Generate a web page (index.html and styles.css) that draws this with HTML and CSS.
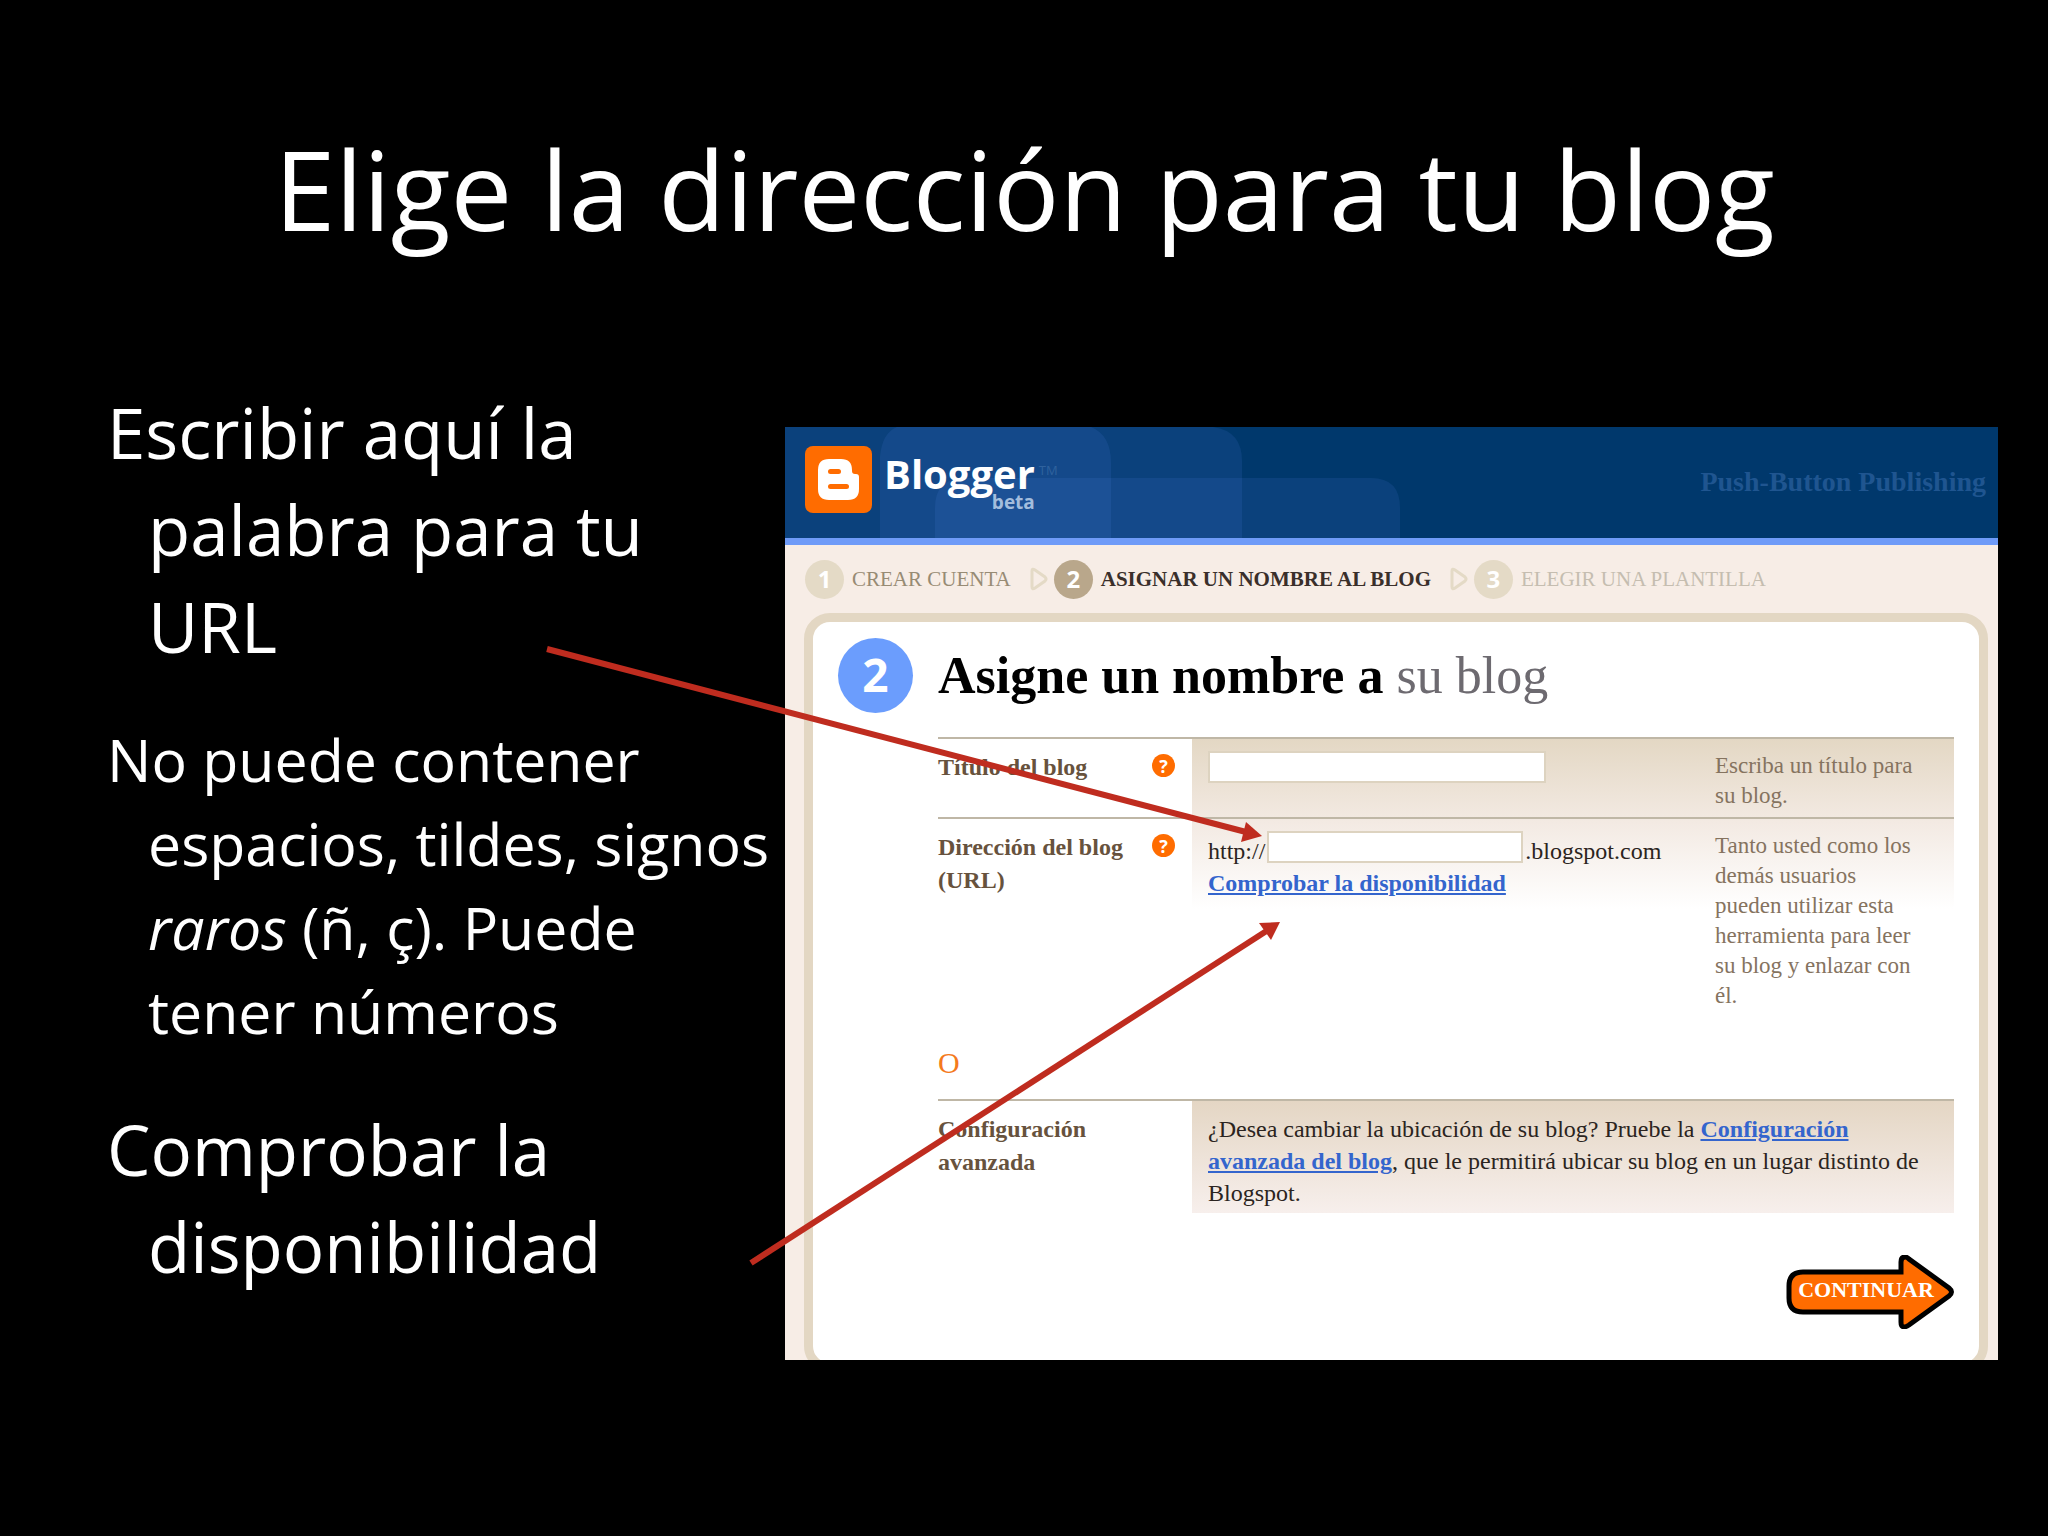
FILE: index.html
```html
<!DOCTYPE html>
<html lang="es">
<head>
  <meta charset="UTF-8">
  <meta name="viewport" content="width=device-width, initial-scale=1.0">
  <title>Elige la dirección para tu blog</title>
  <link rel="stylesheet" href="styles.css">
</head>
<body>
  <main class="slide">
    <h1 class="titulo">Elige la dirección para tu blog</h1>

    <div class="contenido">
      <div class="notas">
        <p>Escribir aquí la<br>palabra para tu<br>URL</p>
        <p class="detalle">No puede contener<br>espacios, tildes, signos<br><em>raros</em> (ñ, ç). Puede<br>tener números</p>
        <p>Comprobar la<br>disponibilidad</p>
      </div>

      <section class="captura">
        <header class="cabecera">
          <svg class="fondo" viewBox="0 0 640 111" aria-hidden="true">
            <path d="M0 0H428Q457 4 457 34V111H0Z"/>
            <path d="M95 111V30Q97 6 112 0H306Q326 8 326 36V111Z"/>
            <path d="M150 111V81Q150 51 180 51H586Q615 51 615 81V111Z"/>
          </svg>
          <svg class="logo" viewBox="0 0 67 67" aria-hidden="true">
            <rect width="67" height="67" rx="8" fill="#ff6c00"/>
            <path fill="#fff" d="M24 13H36Q47 13 47 24V25Q47 28 50 28H51Q54 28 54 31V43Q54 54 43 54H24Q13 54 13 43V24Q13 13 24 13Z"/>
            <rect x="23" y="23" width="13" height="5" rx="2.5" fill="#ff6c00"/>
            <rect x="23" y="38" width="21" height="5" rx="2.5" fill="#ff6c00"/>
          </svg>
          <div class="marca">
            <span class="nombre">Blogger</span>
            <span class="tm">TM</span>
            <span class="beta">beta</span>
          </div>
          <p class="lema">Push-Button Publishing</p>
        </header>

        <ol class="pasos">
          <li class="paso"><span class="num">1</span>CREAR CUENTA</li>
          <li class="flecha"><svg viewBox="0 0 18 24" aria-hidden="true"><path d="M2 4Q2 1 5 3L15 10Q17 12 15 14L5 21Q2 23 2 20Z"/></svg></li>
          <li class="paso actual"><span class="num">2</span>ASIGNAR UN NOMBRE AL BLOG</li>
          <li class="flecha"><svg viewBox="0 0 18 24" aria-hidden="true"><path d="M2 4Q2 1 5 3L15 10Q17 12 15 14L5 21Q2 23 2 20Z"/></svg></li>
          <li class="paso pendiente"><span class="num">3</span>ELEGIR UNA PLANTILLA</li>
        </ol>

        <form class="caja">
          <span class="grande">2</span>
          <h2>Asigne un nombre a <span>su blog</span></h2>

          <div class="campos">
            <div class="fila">
              <label for="nombre">Título del blog</label>
              <button type="button" class="ayuda" aria-label="Ayuda: título">?</button>
              <div class="dato">
                <input type="text" id="nombre" class="largo">
              </div>
              <p class="pista">Escriba un título para su blog.</p>
            </div>
            <div class="fila">
              <label for="url">Dirección del blog (URL)</label>
              <button type="button" class="ayuda" aria-label="Ayuda: dirección">?</button>
              <div class="dato">
                <div class="url">
                  <span>http://</span><input type="text" id="url"><span>.blogspot.com</span>
                </div>
                <a href="#url">Comprobar la disponibilidad</a>
              </div>
              <p class="pista">Tanto usted como los demás usuarios pueden utilizar esta herramienta para leer su blog y enlazar con él.</p>
            </div>

            <p class="o">O</p>

            <div class="avanzada">
              <h3>Configuración avanzada</h3>
              <p>¿Desea cambiar la ubicación de su blog? Pruebe la <a href="#avanzada">Configuración avanzada del blog</a>, que le permitirá ubicar su blog en un lugar distinto de Blogspot.</p>
            </div>

            <button type="submit" class="continuar">
              <svg viewBox="0 0 168 74" aria-hidden="true">
                <path d="M17 17H115V7Q115 2 119 2Q121 2 123 4L163 33Q168 37 163 41L123 70Q115 75 115 67V57H17Q3 57 3 43V31Q3 17 17 17Z"/>
              </svg>
              <span>CONTINUAR</span>
            </button>
          </div>
        </form>
      </section>
    </div>

    <!-- flechas que unen las notas con la captura -->
    <svg class="flechas" viewBox="0 0 2048 1536" aria-hidden="true">
      <path d="M547 649L1246 832" class="linea"/>
      <path d="M1262 836L1241 842L1246 822Z"/>
      <path d="M751 1263L1268 930" class="linea"/>
      <path d="M1280 922L1271 940L1259 923Z"/>
    </svg>
  </main>
</body>
</html>
```
FILE: styles.css
```css
* {
  box-sizing: border-box;
}

body {
  margin: 0;
  background: #000;
  color: #fff;
  font-family: "Open Sans", sans-serif;
}

h1, h2, h3, p {
  margin: 0;
}

.slide {
  position: relative;
  min-height: 100vh;
  padding: 120px 50px 0 107px;
}

.titulo {
  padding-right: 56px;
  margin-bottom: 128px;
  font-size: 110px;
  font-weight: normal;
  line-height: 136px;
  text-align: center;
}

.contenido {
  display: grid;
  grid-template-columns: 678fr 1213fr;
  align-items: start;
}

/* solo la primera línea sale hacia la izquierda */
.notas {
  padding-left: 41px;
  font-size: 69px;
  line-height: 97px;
  text-indent: -41px;
  white-space: nowrap;
}

.notas .detalle {
  margin: 42px 0 48px;
  font-size: 59px;
  line-height: 84px;
}

/* captura de Blogger */
.captura {
  margin-top: 43px;
  overflow: hidden;
  background: #f7ede6;
  color: #2b2420;
  font-family: "Liberation Serif", serif;
  font-size: 24px;
}

.cabecera {
  position: relative;
  display: flex;
  align-items: center;
  height: 118px;
  padding: 0 12px 6px 20px;
  background: #00386c;
  border-bottom: 7px solid #6f9bf8;
}

.fondo {
  position: absolute;
  left: 0;
  top: 0;
  height: 111px;
  fill: #6090ff;
  fill-opacity: 0.11;
}

.logo {
  position: relative;
  width: 67px;
  height: 67px;
}

.marca {
  position: relative;
  display: grid;
  grid-template-columns: auto auto;
  align-items: start;
  margin-left: 12px;
  padding-top: 4px;
  color: #fff;
  font-family: "Open Sans", sans-serif;
  font-weight: bold;
}

.nombre {
  font-size: 40px;
  line-height: 40px;
}

.tm {
  padding-left: 4px;
  color: #2f629e;
  font-size: 13px;
  font-weight: normal;
  line-height: 32px;
}

.beta {
  justify-self: end;
  color: #a3bddd;
  font-size: 19px;
  line-height: 16px;
}

.lema {
  position: relative;
  margin-left: auto;
  padding-top: 4px;
  color: #1f5590;
  font-size: 28px;
  font-weight: bold;
}

.pasos {
  display: flex;
  align-items: center;
  height: 68px;
  margin: 0;
  padding: 0 20px;
  list-style: none;
  color: #978b74;
  font-size: 21px;
  white-space: nowrap;
}

.paso {
  display: flex;
  align-items: center;
  gap: 8px;
}

.num {
  width: 39px;
  height: 39px;
  border-radius: 50%;
  background: #e4dac6;
  color: #fff;
  font-family: "Open Sans", sans-serif;
  font-size: 24px;
  font-weight: bold;
  line-height: 38px;
  text-align: center;
}

.actual {
  color: #3a2f2a;
  font-weight: bold;
}

.actual .num {
  background: #b9a78b;
}

.pendiente {
  color: #c5bdb0;
}

.flecha {
  height: 24px;
  margin: 0 6px 0 19px;
}

.flecha svg {
  width: 18px;
  height: 24px;
  fill: none;
  stroke: #e4dac6;
  stroke-width: 3;
}

.caja {
  display: grid;
  grid-template-columns: 75px 1fr;
  column-gap: 25px;
  margin: 0 10px -12px 19px;
  padding: 16px 25px 34px;
  border: 9px solid #e3d7c3;
  border-radius: 26px;
  background: #fff;
}

.grande {
  width: 75px;
  height: 75px;
  border-radius: 50%;
  background: #6b9dfd;
  color: #fff;
  font-family: "Open Sans", sans-serif;
  font-size: 46px;
  font-weight: bold;
  line-height: 73px;
  text-align: center;
}

h2 {
  color: #000;
  font-size: 52px;
  line-height: 76px;
}

h2 span {
  color: #6d6a70;
  font-weight: normal;
}

.campos {
  grid-column: 2;
  margin-top: 23px;
  background: linear-gradient(#e3d7c3, #f3eae3 50%, #fff) right top / 75% 172px no-repeat;
}

.fila {
  display: grid;
  grid-template-columns: 21% 4% 1fr 223px;
  align-items: start;
  padding: 12px 16px 6px 0;
  border-top: 2px solid #bfb7a6;
}

.fila label,
.avanzada h3 {
  color: #67523d;
  font-size: 24px;
  font-weight: bold;
  line-height: 33px;
}

.ayuda {
  width: 23px;
  height: 23px;
  margin: 3px 0 0 4px;
  padding: 0;
  border: 0;
  border-radius: 50%;
  background: #ff6c00;
  color: #fff;
  font-family: "Open Sans", sans-serif;
  font-size: 18px;
  font-weight: bold;
  line-height: 22px;
}

.dato {
  padding-left: 20px;
  line-height: 32px;
}

.dato input {
  display: block;
  width: 256px;
  height: 32px;
  border: 2px solid #ddd3c0;
  background: #fff;
}

.dato .largo {
  width: 338px;
}

.url {
  display: flex;
  align-items: flex-end;
  gap: 2px;
  margin-bottom: 4px;
  line-height: 24px;
}

a {
  color: #3465cd;
  font-weight: bold;
}

.pista {
  max-width: 208px;
  color: #85735f;
  font-size: 23px;
  line-height: 30px;
}

.o {
  margin: 30px 0 20px;
  color: #f47a1c;
  font-size: 30px;
  line-height: 32px;
}

.avanzada {
  display: grid;
  grid-template-columns: 1fr 3fr;
  border-top: 2px solid #bfb7a6;
}

.avanzada h3 {
  padding: 12px 60px 0 0;
}

.avanzada p {
  padding: 12px 12px 4px 16px;
  background: linear-gradient(#e4d6c4, #f7efec);
  line-height: 32px;
}

.continuar {
  display: grid;
  width: 168px;
  margin: 42px 0 0 auto;
  padding: 0;
  border: 0;
  background: none;
  color: #fff;
  font: bold 22px "Liberation Serif", serif;
}

.continuar svg,
.continuar span {
  grid-area: 1 / 1;
  align-self: center;
}

.continuar svg {
  width: 168px;
  height: 74px;
  fill: #ff6c00;
  stroke: #000;
  stroke-width: 5;
}

.continuar span {
  padding: 0 8px 4px 0;
}

.flechas {
  position: absolute;
  left: 0;
  top: 0;
  width: 100%;
  fill: #bf2c1f;
  pointer-events: none;
}

.linea {
  stroke: #bf2c1f;
  stroke-width: 6;
}
```
